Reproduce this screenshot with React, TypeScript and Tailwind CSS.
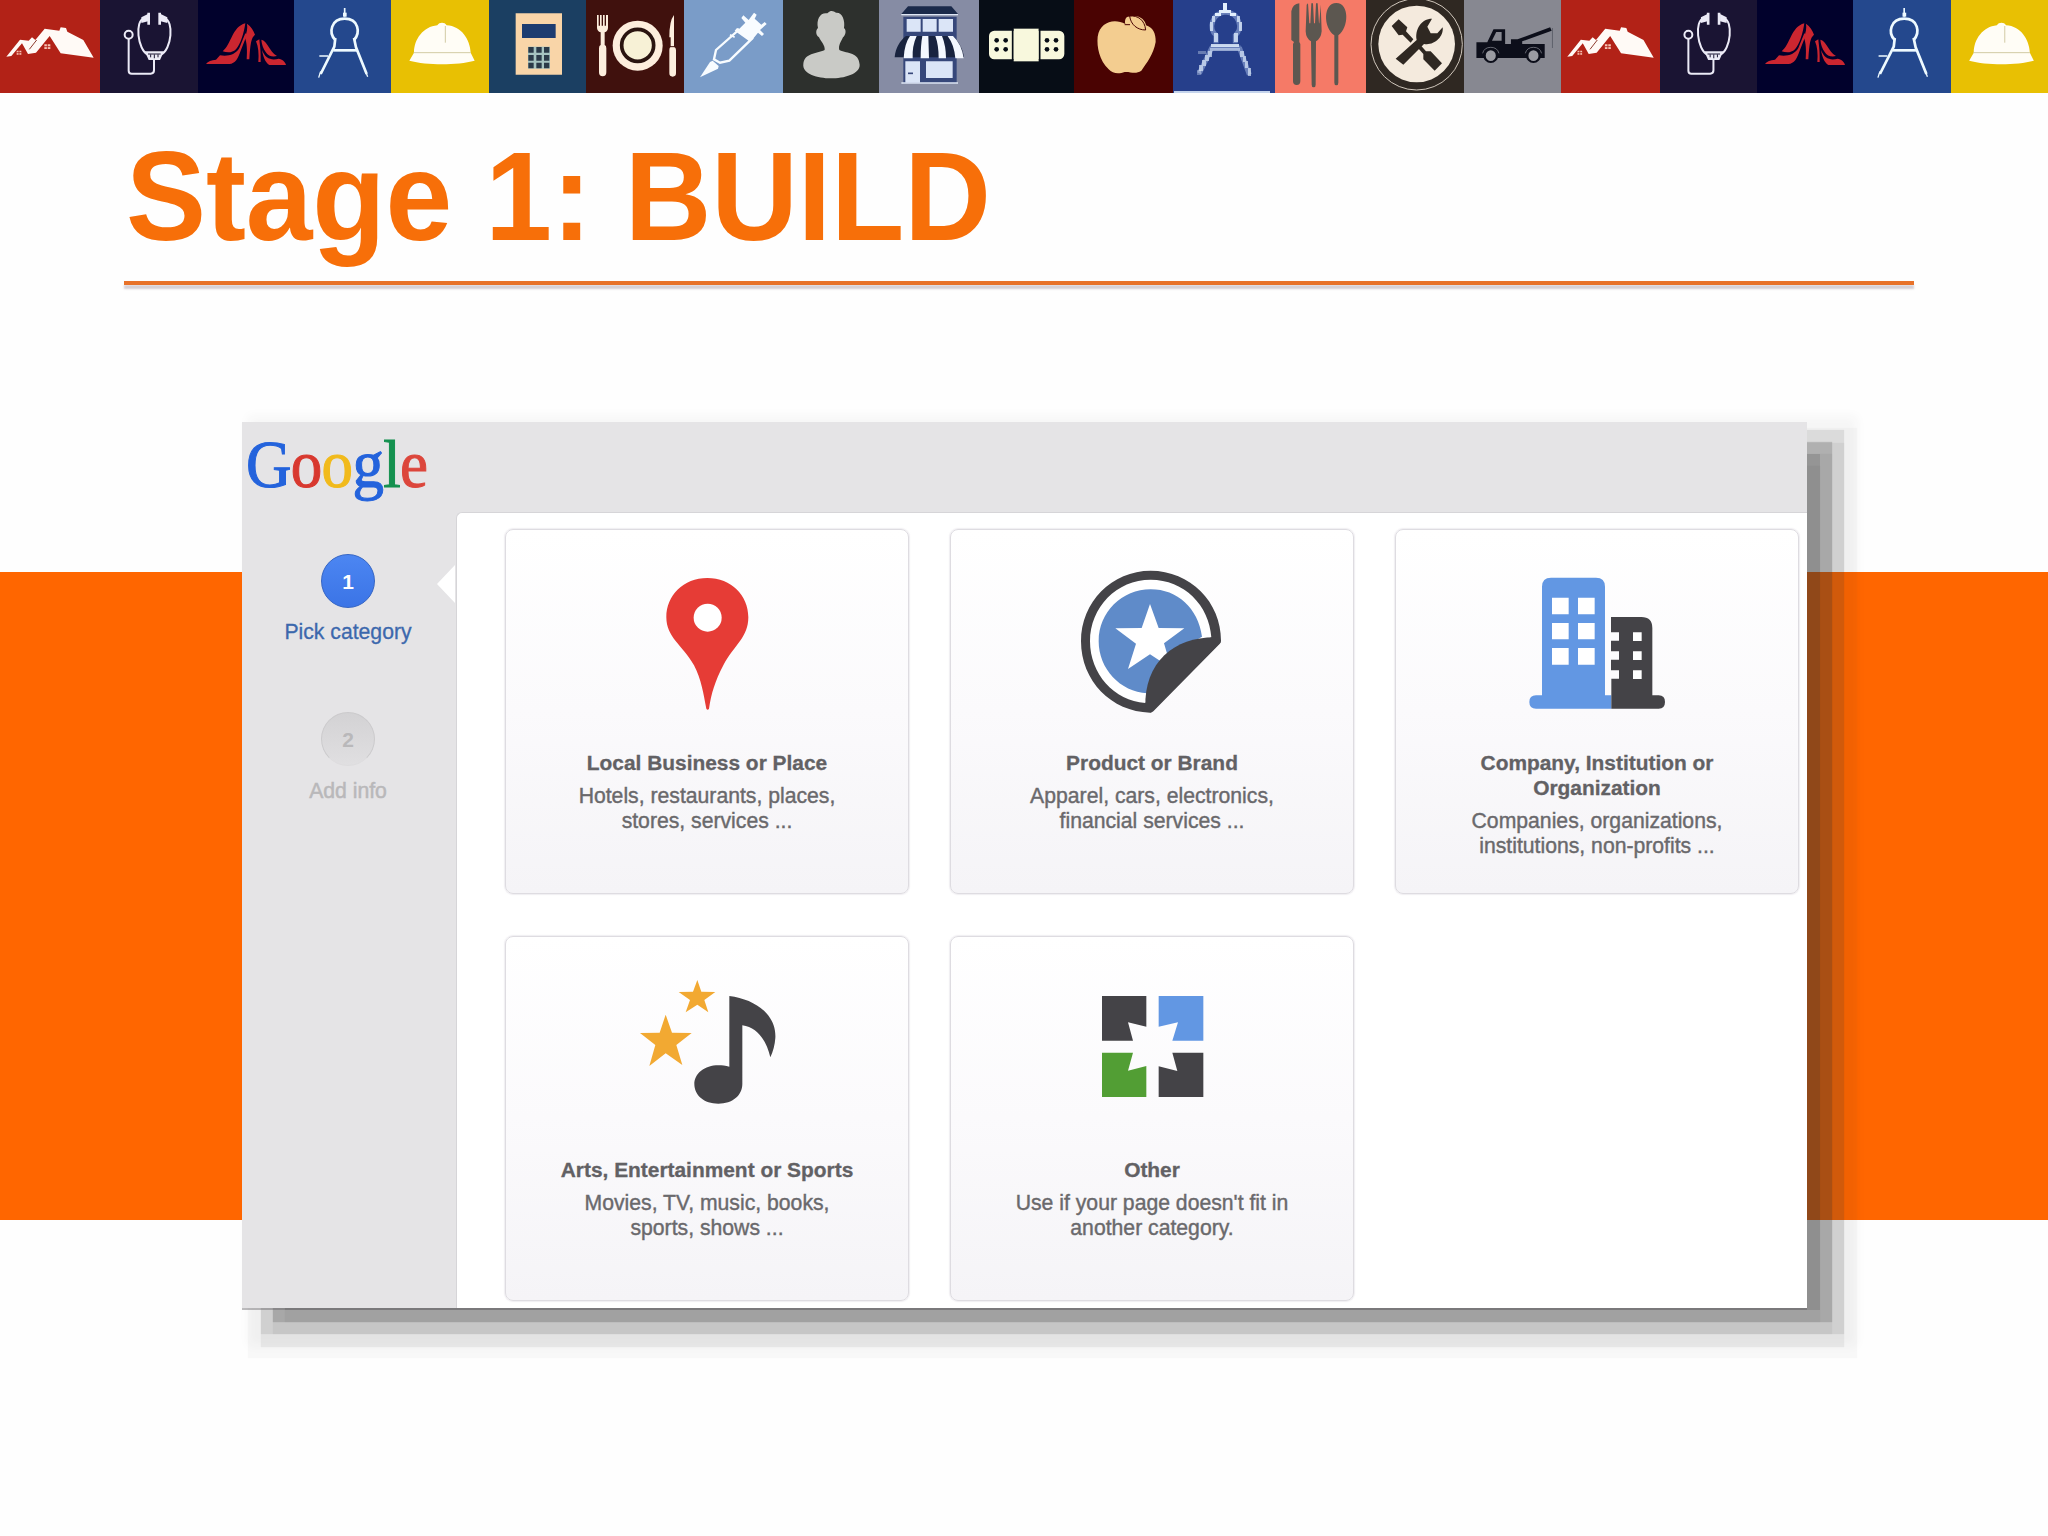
import type { ReactNode } from "react";

type Tile = { width: string; bg: string; viewBox: string; art: ReactNode };

const houses = (
  <>
    <path
      fill="#fffaf6"
      d="M19 170 L60 119 L86 122 L96 112 L106 120 L134 86 L178 92 L182 82 L198 84 L202 95 L250 120 L281 173 L182 160 L149 108 L108 158 L84 162 L66 130 L34 168 Z"
    />
    <path stroke="#8c3a2c" strokeWidth="3" fill="none" d="M88 148 L110 120" />
    <path fill="#f7c3b4" d="M133 133h18v14h-18zM50 152h14v12h-14z" />
    <path stroke="#b22217" strokeWidth="2.5" d="M142 132v16M132 140h20M57 151v14M49 158h16" />
  </>
);

const stethoscope = (
  <g fill="none" stroke="#ecebf7" strokeWidth="6">
    <path d="M432 56 C404 60 412 150 444 164 M494 56 C522 60 516 150 482 164" />
    <path strokeWidth="8" d="M446 38 V74 M479 38 V74" />
    <path fill="#ecebf7" stroke="none" d="M424 52l20-10v22l-20 5zM502 52l-20-10v22l20 5z" />
    <path fill="#ecebf7" stroke="none" d="M434 154h58l-12 26h-34z" />
    <path stroke="#1a1433" strokeWidth="3" d="M444 162h38M452 163v9M463 163v12M474 163v9" />
    <circle cx="386" cy="104" r="12" />
    <path d="M386 117 V212 Q386 221 395 221 H452 Q462 221 462 211 V176" />
  </g>
);

const heels = (
  <g fill="#cb2630">
    <path d="M618 192 C624 184 634 180 648 179 L660 166 C684 170 706 164 718 144 L736 100 L741 104 L722 152 C714 176 706 190 688 192 Z" />
    <path d="M668 154 C694 134 696 80 736 70 C732 98 722 132 708 148 C696 160 680 158 668 154Z" />
    <path d="M741 71 C753 78 761 92 765 104 C753 114 751 132 748 178 H740 C742 150 741 128 734 112 C741 98 743 84 741 71Z" />
    <path d="M768 124 L778 118 C779 134 783 146 782 186 H775 C777 162 775 140 768 124Z" />
    <path d="M784 119 C802 122 806 152 831 168 C818 172 804 168 797 156 C790 146 785 134 784 119Z" />
    <path d="M786 150 C796 176 814 182 836 176 C846 178 856 184 858 195 H808 C796 188 789 170 786 150Z" />
  </g>
);

const compass = (
  <g fill="none" stroke="#eefaff" strokeWidth="8">
    <path strokeWidth="5" d="M1034 24 V50" />
    <path strokeWidth="9" d="M1029 38h11v12h-11z" fill="#eefaff" stroke="none" />
    <path d="M1006 120 C984 98 994 56 1034 56 C1076 56 1082 98 1062 120" />
    <path d="M1006 114 L1003 140 L962 222 M1062 114 L1068 142 L1100 222" />
    <path d="M1000 151 H1072" />
    <path strokeWidth="4" d="M958 168 H984 M962 214 L956 233 M1096 212 L1103 230" />
  </g>
);

const helmet = (
  <>
    <path
      fill="#fffdf6"
      d="M1228 182 L1242 158 C1242 118 1270 80 1312 76 C1318 66 1334 66 1340 76 C1384 78 1410 118 1412 158 L1424 182 C1370 196 1282 196 1228 182Z"
    />
    <path stroke="#c8bf94" strokeWidth="2.5" fill="none" d="M1240 158H1412M1336 78V128" />
  </>
);

const tiles: Tile[] = [
  { width: "w-[100px]", bg: "bg-[#b22217]", viewBox: "0 0 300 279", art: houses },
  { width: "w-[98px]", bg: "bg-[#1a1433]", viewBox: "300 0 294 279", art: stethoscope },
  { width: "w-[96px]", bg: "bg-[#01012c]", viewBox: "594 0 288 279", art: heels },
  { width: "w-[97px]", bg: "bg-[#24488d]", viewBox: "882 0 291 279", art: compass },
  { width: "w-[98px]", bg: "bg-[#e8c003]", viewBox: "1173 0 294 279", art: helmet },
  {
    width: "w-[97px]",
    bg: "bg-[#1b3f62]",
    viewBox: "27 0 291 279",
    art: (
      <>
        <path fill="#f9d5a8" d="M107 40h139v184H107z" />
        <path fill="#1d3c70" d="M126 72h101v42H126z" />
        <path fill="#a6c3c0" d="M144 140h66v66h-66z" />
        <g fill="#2b3a48">
          <path d="M145 141h16v17h-16zM169 141h16v17h-16zM192 141h16v17h-16zM145 165h16v17h-16zM169 165h16v17h-16zM192 165h16v17h-16zM145 188h16v17h-16zM169 188h16v17h-16zM192 188h16v17h-16z" />
        </g>
      </>
    ),
  },
  {
    width: "w-[98px]",
    bg: "bg-[#40110d]",
    viewBox: "318 0 294 279",
    art: (
      <>
        <circle cx="473" cy="137" r="75" fill="#fdeedd" />
        <circle cx="473" cy="136" r="48" fill="#f7f1d6" stroke="#2a1410" strokeWidth="11" />
        <path
          fill="#fdeedd"
          d="M351 45h5v32h4V45h5v32h4V45h5v32h4V45h6v38q0 10-10 14v38q5 1 5 10v72q0 12-11 12t-11-12v-72q0-9 5-10V97q-11-4-11-14z"
        />
        <path fill="#fdeedd" d="M582 45v95q6 2 6 10v70q0 10-10 10t-10-10v-70q0-8 4-10v-28h-4q0-50 14-67z" />
        <path stroke="#40110d" strokeWidth="3" d="M566 140h22" />
      </>
    ),
  },
  {
    width: "w-[99px]",
    bg: "bg-[#7a9cc8]",
    viewBox: "612 0 297 279",
    art: (
      <>
        <path fill="#f8fcff" d="M660 232 L690 186 L698 182 L716 198 L714 206 Z" />
        <path
          fill="none"
          stroke="#f8fcff"
          strokeWidth="7"
          d="M702 178 L708 150 L776 90 L816 116 L748 182 L720 188 Z"
        />
        <path
          fill="#f8fcff"
          d="M764 92 L771 84 L778 86 L796 68 L784 54 L790 46 L806 60 L822 38 L830 44 L824 56 L844 74 L854 66 L860 72 L840 90 L852 102 L846 108 L834 98 L818 118 L808 124 Z"
        />
        <path stroke="#f8fcff" strokeWidth="5" d="M750 104 L764 112" />
      </>
    ),
  },
  {
    width: "w-[96px]",
    bg: "bg-[#2d302d]",
    viewBox: "909 0 288 279",
    art: (
      <path
        fill="#c9cac6"
        d="M1034 150 C1036 136 1022 124 1017 112 C1005 104 1008 88 1014 84 C1008 56 1022 36 1042 40 C1054 28 1060 34 1068 38 C1086 36 1096 60 1092 84 C1100 90 1097 106 1089 112 C1084 124 1074 136 1078 150 C1104 162 1136 156 1139 194 C1140 222 1092 235 1052 235 C1014 235 966 222 970 192 C974 158 1008 162 1034 150Z"
      />
    ),
  },
  {
    width: "w-[100px]",
    bg: "bg-[#868ca4]",
    viewBox: "1197 0 300 279",
    art: (
      <>
        <path fill="#1b2a4a" d="M1284 19h130l20 23h-170z" />
        <path fill="#36477a" d="M1270 50h160v200h-160z" />
        <path stroke="#dfe7f5" strokeWidth="4" d="M1264 44h170M1264 249h170" />
        <path fill="#dbe5f7" d="M1280 57h42v38h-42zM1328 57h42v38h-42zM1376 57h43v38h-43zM1276 184h44v64h-44zM1338 184h80v50h-80z" />
        <path stroke="#36477a" strokeWidth="5" d="M1284 220h15" />
        <path fill="#18233f" d="M1278 108 H1418 C1436 124 1448 144 1452 172 H1244 C1246 144 1260 122 1278 108Z" />
        <path
          fill="#f4f8ff"
          d="M1290 108h20q-14 30-12 67h-27q2-44 19-67zM1327 108h18l2 67h-25q0-40 5-67zM1366 108h20q12 30 12 67h-22q0-40-10-67zM1403 108h16q26 24 32 67h-25q-3-40-23-67z"
        />
      </>
    ),
  },
  {
    width: "w-[95px]",
    bg: "bg-[#070d16]",
    viewBox: "57 0 285 279",
    art: (
      <>
        <rect x="87" y="92" width="226" height="86" rx="16" fill="#f8f8dd" />
        <path fill="#f8f8dd" d="M161 86h75v98h-75z" />
        <path stroke="#070d16" strokeWidth="5" d="M158 88v92M239 88v92" />
        <g fill="#070d16">
          <circle cx="110" cy="121" r="7" /><circle cx="137" cy="121" r="7" />
          <circle cx="110" cy="148" r="7" /><circle cx="137" cy="148" r="7" />
          <circle cx="261" cy="121" r="7" /><circle cx="288" cy="121" r="7" />
          <circle cx="261" cy="148" r="7" /><circle cx="288" cy="148" r="7" />
        </g>
      </>
    ),
  },
  {
    width: "w-[99px]",
    bg: "bg-[#4a0302]",
    viewBox: "342 0 297 279",
    art: (
      <>
        <path
          fill="#f3cd90"
          d="M496 72 C492 58 500 46 512 50 C534 42 556 58 558 76 C578 82 588 100 587 126 C580 164 562 186 544 212 C526 224 510 214 494 216 C478 222 458 222 446 208 C418 180 410 142 413 110 C420 66 462 54 496 72Z"
        />
        <path fill="#f3cd90" stroke="#4a0302" strokeWidth="3" d="M509 48 C534 46 554 60 557 90 C532 90 512 74 509 48Z" />
        <path fill="none" stroke="#4a0302" strokeWidth="3" d="M494 74h16" />
      </>
    ),
  },
  {
    width: "w-[102px]",
    bg: "bg-[#263f8b]",
    viewBox: "639 0 306 279",
    art: (
      <>
        <path
          fill="none"
          stroke="#a9c0ea"
          strokeWidth="15"
          opacity=".5"
          d="M768 130 V106 C744 86 756 38 797 36 C838 38 850 86 826 106 V130 M750 144 H842 M756 142 L718 220 M838 142 L868 224"
        />
        <g fill="#e2effd" shapeRendering="crispEdges">
          <path d="M790 8h12v24h-12zM778 31h36v9h-36zM765 40h18v9h-18zM810 40h18v9h-18z" />
          <path opacity=".75" d="M755 49h10v18h-10zM831 49h10v18h-10zM750 67h9v27h-9zM837 67h9v27h-9zM762 100h12v27h-12zM822 100h12v27h-12z" />
          <path opacity=".85" d="M753 132h84v8h-84z" />
          <path opacity=".5" d="M750 143h90v9h-90z" />
          <path opacity=".65" d="M744 152h12v18h-12zM735 165h12v18h-12zM726 180h12v18h-12zM717 196h12v18h-12zM840 152h12v18h-12zM849 168h9v18h-9zM855 184h9v21h-9zM863 203h9v24h-9z" />
          <path opacity=".35" d="M715 153h24v10h-24zM710 210h12v14h-12z" />
          <path opacity=".85" d="M642 273h288v6H642z" />
        </g>
      </>
    ),
  },
  {
    width: "w-[91px]",
    bg: "bg-[#f57a67]",
    viewBox: "945 0 273 279",
    art: (
      <g fill="#5c5750">
        <path d="M1018 10v116l3 6v112q0 11-11 11t-11-11V132l3-6-8-6V34q4-22 24-24z" />
        <path d="M1040 14l4-4 4 60h3l3-60h5l3 60h3l3-60h5l4 60h1l4-56 3 80q-2 22-17 30l-1 130q0 8-6 8t-6-8l-2-130q-15-8-16-30z" />
        <path d="M1129 9c40 0 38 74 6 97v142q0 8-6 8t-6-8V106c-34-23-34-97 6-97z" />
      </g>
    ),
  },
  {
    width: "w-[98px]",
    bg: "bg-[#2f2822]",
    viewBox: "1218 0 294 279",
    art: (
      <>
        <circle cx="1370" cy="133" r="137" fill="none" stroke="#cfc6bb" strokeWidth="3" />
        <circle cx="1370" cy="132" r="115" fill="#f4eadd" />
        <g fill="#2f2822">
          <path d="M1307 176 L1370 120 C1364 88 1384 56 1416 56 L1402 80 L1412 100 L1432 100 L1448 82 C1452 112 1420 138 1392 132 L1330 194 Z" />
          <path d="M1295 78 L1316 58 L1342 82 L1338 94 L1360 118 L1352 128 L1328 104 L1316 106 Z" />
          <path d="M1374 144 L1384 138 L1398 154 L1412 154 L1446 190 L1424 212 L1390 178 L1390 162 Z" />
        </g>
      </>
    ),
  },
  {
    width: "w-[97px]",
    bg: "bg-[#878891]",
    viewBox: "62 0 250 279",
    art: (
      <>
        <path
          fill="#0c0e1a"
          d="M94 127 H122 L138 88 H168 V132 H183 V118 H200 L284 82 L288 92 L212 124 V132 H270 V174 H94 Z"
        />
        <path fill="#878891" d="M134 122 L145 96 H159 V122Z" />
        <path stroke="#50525d" strokeWidth="2" d="M290 84V144" />
        <g fill="#9a9ba2" stroke="#0c0e1a" strokeWidth="6">
          <ellipse cx="131" cy="167" rx="16" ry="19" />
          <ellipse cx="241" cy="167" rx="16" ry="19" />
        </g>
        <g fill="none" stroke="#878891" strokeWidth="2">
          <path d="M110 160q4-18 21-18t21 18M220 160q4-18 21-18t21 18" />
        </g>
      </>
    ),
  },
  { width: "w-[99px]", bg: "bg-[#b22217]", viewBox: "0 0 300 279", art: houses },
  { width: "w-[97px]", bg: "bg-[#1a1433]", viewBox: "300 0 294 279", art: stethoscope },
  { width: "w-[96px]", bg: "bg-[#01012c]", viewBox: "594 0 288 279", art: heels },
  { width: "w-[98px]", bg: "bg-[#24488d]", viewBox: "882 0 291 279", art: compass },
  { width: "w-[97px]", bg: "bg-[#e8c003]", viewBox: "1173 0 294 279", art: helmet },
];

type Category = { title: string[]; lines: string[]; viewBox: string; art: ReactNode };

const categories: Category[] = [
  {
    title: ["Local Business or Place"],
    lines: ["Hotels, restaurants, places,", "stores, services ..."],
    viewBox: "18 30 1206 660",
    art: (
      <>
        <path
          fill="#e63c36"
          d="M622 174 C694 174 745 226 745 292 C745 352 704 374 670 436 C645 484 634 520 627 566 Q623 572 619 566 C610 520 604 478 582 436 C546 374 499 352 499 292 C499 226 550 174 622 174Z"
        />
        <circle cx="623" cy="293" r="42" fill="#fff" />
      </>
    ),
  },
  {
    title: ["Product or Brand"],
    lines: ["Apparel, cars, electronics,", "financial services ..."],
    viewBox: "33 30 1206 660",
    art: (
      <>
        <path
          fill="#444347"
          d="M632 152 C750 152 844 246 843 362 Q843 368 838 373 L640 574 Q636 578 630 578 C514 576 423 482 423 364 C423 246 516 152 632 152Z"
        />
        <path fill="#fff" d="M632 179 C732 179 808 256 814 352 L720 400 L616 549 C522 542 450 462 450 364 C450 262 530 179 632 179Z" />
        <path fill="#5f8bc9" d="M632 208 C712 208 774 264 786 350 L700 400 L622 520 C540 516 476 446 476 364 C476 276 546 208 632 208Z" />
        <path fill="#fff" d="M630 252 L656 324 L733 325 L672 370 L694 445 L630 403 L564 447 L588 371 L526 325 L605 324 Z" />
        <path fill="#444347" d="M838 352 C710 346 612 420 616 562 L632 578 L842 366Z" />
      </>
    ),
  },
  {
    title: ["Company, Institution or", "Organization"],
    lines: ["Companies, organizations,", "institutions, non-profits ..."],
    viewBox: "48 390 1206 660",
    art: (
      <>
        <path
          fill="#6297e3"
          d="M486 560 Q486 533 513 533 H648 Q675 533 675 560 V886 H694 V926 H468 Q448 926 448 906 Q448 886 468 886 H486Z"
        />
        <path
          fill="#444347"
          d="M693 651 H784 Q817 651 817 684 V886 H836 Q855 886 855 906 Q855 926 836 926 H694 V836 H717 V811 H693 V779 H717 V754 H693 V722 H717 V697 H693Z"
        />
        <path
          fill="#fff"
          d="M516 593h50v50h-50zM594 593h50v50h-50zM516 669h50v49h-50zM594 669h50v49h-50zM516 744h50v50h-50zM594 744h50v50h-50zM759 697h26v26h-26zM759 754h26v26h-26zM759 811h26v26h-26z"
        />
      </>
    ),
  },
  {
    title: ["Arts, Entertainment or Sports"],
    lines: ["Movies, TV, music, books,", "sports, shows ..."],
    viewBox: "18 51 1206 660",
    art: (
      <>
        <path
          fill="#f2a932"
          d="M592 180 L604 215 L646 216 L613 240 L625 277 L592 254 L557 277 L570 240 L536 216 L579 215Z M497 284 L516 338 L575 339 L529 375 L547 435 L497 400 L448 438 L466 375 L420 339 L479 338Z"
        />
        <path
          fill="#444347"
          d="M688 228 C768 238 830 286 826 354 Q824 384 811 412 C800 362 772 322 727 316 V492 C727 526 698 551 655 551 C612 551 583 526 583 492 C583 452 630 424 688 440Z"
        />
      </>
    ),
  },
  {
    title: ["Other"],
    lines: ["Use if your page doesn't fit in", "another category."],
    viewBox: "33 51 1206 660",
    art: (
      <>
        <path fill="#444347" d="M486 228h133v92l-55-13 15 55h-93zM790 531H656v-92l56 14-15-55h93z" />
        <path fill="#6297e3" d="M790 228H656v92l58-13-17 55h93z" />
        <path fill="#529e34" d="M486 531h133v-93l-55 14 15-54h-93z" />
      </>
    ),
  },
];

function IconStrip() {
  return (
    <header className="flex h-[93px] w-full overflow-hidden">
      {tiles.map((tile, i) => (
        <div key={i} className={`h-full shrink-0 ${tile.width} ${tile.bg}`}>
          <svg className="block h-full w-full" viewBox={tile.viewBox} preserveAspectRatio="none">
            {tile.art}
          </svg>
        </div>
      ))}
    </header>
  );
}

function Logo() {
  return (
    <div className="flex h-[90px] origin-[0_62px] scale-y-[1.06] items-start pt-[8px] pl-[4px] font-['Liberation_Serif',serif] text-[63px] leading-[72px] tracking-[-0.7px] [-webkit-text-stroke:1px_currentColor]">
      <span className="text-[#2463dc]">G</span>
      <span className="text-[#d8382f]">o</span>
      <span className="text-[#f1ba1c]">o</span>
      <span className="text-[#2463dc]">g</span>
      <span className="text-[#159150]">l</span>
      <span className="text-[#dc463c]">e</span>
    </div>
  );
}

function Sidebar() {
  return (
    <nav className="relative flex w-[214px] shrink-0 flex-col items-center pt-[42px] pr-[2px] text-[21.2px] leading-[25px]">
      <div className="flex size-[54px] items-center justify-center rounded-full border border-[#3565c4] bg-linear-to-b from-[#4c86f2] to-[#3b74e6] text-[21px] font-bold text-white">
        1
      </div>
      <div className="mt-[11px] text-[#3c68ad] [-webkit-text-stroke:0.3px_currentColor]">Pick category</div>
      <div className="mt-[68px] flex size-[54px] items-center justify-center rounded-full border border-[#cbcacc] border-b-[#dddcde] bg-linear-to-b from-[#d3d2d4] to-[#e0dfe1] text-[21px] font-bold text-[#b9b8ba]">
        2
      </div>
      <div className="mt-[12px] text-[#b9b8ba] [-webkit-text-stroke:0.5px_currentColor]">Add info</div>
      <svg className="absolute top-[53px] right-px h-[38px] w-[18px]" viewBox="0 0 18 38">
        <path d="M18 0V38L0 19Z" fill="#fff" />
      </svg>
    </nav>
  );
}

function Card({ item }: { item: Category }) {
  return (
    <article className="flex h-[365px] w-[404px] flex-col items-center rounded-[8px] border border-[#dedce1] bg-linear-to-b from-white via-[#fbfafc] to-[#f5f4f7] text-center text-[21.2px] leading-[25px] whitespace-nowrap text-[#6a696c] shadow-[0_0_1px_1px_rgba(225,222,230,0.5)]">
      <svg className="block h-[220px] w-[402px] shrink-0" viewBox={item.viewBox}>
        {item.art}
      </svg>
      <h2 className="text-[20.9px] font-bold text-[#626164] [-webkit-text-stroke:0.3px_currentColor]">
        {item.title.map((t) => (
          <span key={t} className="block">{t}</span>
        ))}
      </h2>
      <p className="mt-[8px] [-webkit-text-stroke:0.4px_currentColor]">
        {item.lines.map((t) => (
          <span key={t} className="block">{t}</span>
        ))}
      </p>
    </article>
  );
}

function Panel() {
  return (
    <section className="flex h-[886px] w-[1565px] flex-col bg-[#e5e4e6] shadow-[0px_2px_0_0_rgba(90,88,92,0.4),28px_17px_0_-15px_rgba(51,51,51,0.16),28px_29px_1px_-15px_rgba(51,51,51,0.06),28px_17px_1px_-3px_rgba(51,51,51,0.2),28px_29px_1px_-3px_rgba(51,51,51,0.06),28px_17px_1px_9px_rgba(51,51,51,0.11),28px_30px_1px_9px_rgba(51,51,51,0.07),28px_28px_1px_22px_rgba(51,51,51,0.03),28px_16px_10px_22px_rgba(51,51,51,0.04)]">
      <Logo />
      <div className="flex min-h-0 flex-1">
        <Sidebar />
        <main className="grid flex-1 grid-cols-[404px_404px_404px] content-start gap-x-[41px] gap-y-[42px] rounded-tl-[6px] border-t border-l border-[#d6d5d8] bg-white pt-[16px] pl-[48px]">
          {categories.map((c) => (
            <Card key={c.title[0]} item={c} />
          ))}
        </main>
      </div>
    </section>
  );
}

export default function App() {
  return (
    <div className="flex h-[1536px] w-[2048px] flex-col overflow-hidden bg-[#fefefe] font-['Liberation_Sans',Arial,sans-serif]">
      <IconStrip />
      <div className="ml-[126px] h-[187px] w-[1788px] pt-[37px]">
        <h1 className="origin-[0_109px] scale-y-[1.045] text-[120px] leading-[136px] font-bold tracking-[-0.15px] whitespace-nowrap text-[#f76f09]">
          Stage 1: BUILD
        </h1>
      </div>
      <div className="ml-[124px] h-[4px] w-[1790px] shrink-0 translate-y-px bg-[#e8722a] shadow-[0_4px_2px_0_rgba(120,100,120,0.3)]" />
      <div className="mt-[138px] flex h-[886px] bg-[linear-gradient(to_bottom,transparent_150px,#ff6600_150px,#ff6600_798px,transparent_798px)] pl-[242px]">
        <Panel />
      </div>
    </div>
  );
}
